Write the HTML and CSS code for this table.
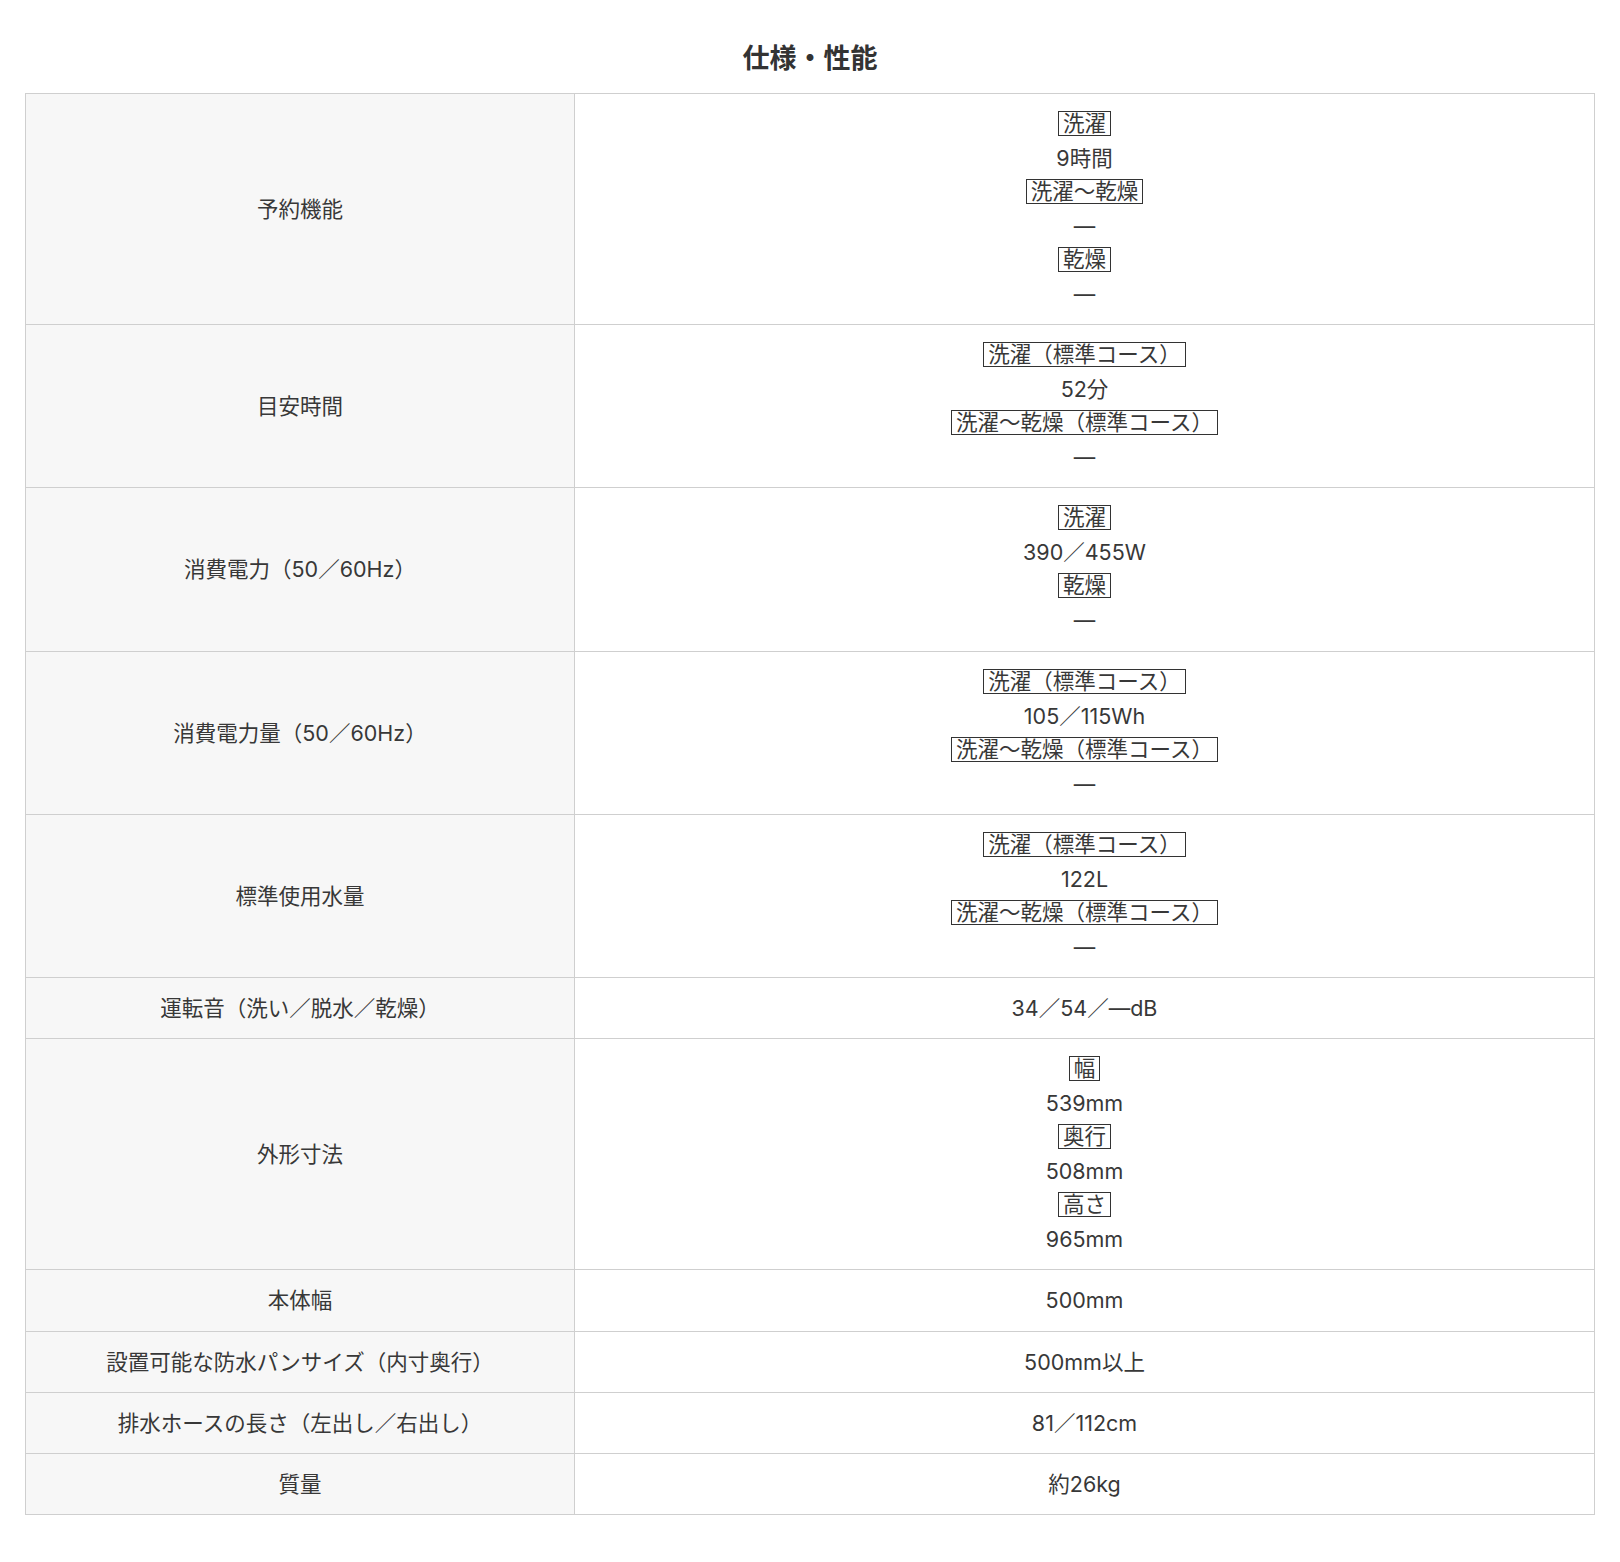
FILE: index.html
```html
<!DOCTYPE html>
<html lang="ja">
<head>
<meta charset="utf-8">
<title>仕様・性能</title>
<link rel="stylesheet" href="styles.css">
</head>
<body>
<section class="spec">
  <h2 class="spec-title">仕様・性能</h2>
  <table class="spec-table">
    <tbody>
      <tr>
        <th>予約機能</th>
        <td>
          <div class="line"><span class="tag">洗濯</span></div>
          <div class="line">9時間</div>
          <div class="line"><span class="tag">洗濯～乾燥</span></div>
          <div class="line">―</div>
          <div class="line"><span class="tag">乾燥</span></div>
          <div class="line">―</div>
        </td>
      </tr>
      <tr>
        <th>目安時間</th>
        <td>
          <div class="line"><span class="tag">洗濯（標準コース）</span></div>
          <div class="line">52分</div>
          <div class="line"><span class="tag">洗濯～乾燥（標準コース）</span></div>
          <div class="line">―</div>
        </td>
      </tr>
      <tr>
        <th>消費電力（50／60Hz）</th>
        <td>
          <div class="line"><span class="tag">洗濯</span></div>
          <div class="line">390／455W</div>
          <div class="line"><span class="tag">乾燥</span></div>
          <div class="line">―</div>
        </td>
      </tr>
      <tr>
        <th>消費電力量（50／60Hz）</th>
        <td>
          <div class="line"><span class="tag">洗濯（標準コース）</span></div>
          <div class="line">105／115Wh</div>
          <div class="line"><span class="tag">洗濯～乾燥（標準コース）</span></div>
          <div class="line">―</div>
        </td>
      </tr>
      <tr>
        <th>標準使用水量</th>
        <td>
          <div class="line"><span class="tag">洗濯（標準コース）</span></div>
          <div class="line">122L</div>
          <div class="line"><span class="tag">洗濯～乾燥（標準コース）</span></div>
          <div class="line">―</div>
        </td>
      </tr>
      <tr>
        <th>運転音（洗い／脱水／乾燥）</th>
        <td><div class="line">34／54／―dB</div></td>
      </tr>
      <tr>
        <th>外形寸法</th>
        <td>
          <div class="line"><span class="tag">幅</span></div>
          <div class="line">539mm</div>
          <div class="line"><span class="tag">奥行</span></div>
          <div class="line">508mm</div>
          <div class="line"><span class="tag">高さ</span></div>
          <div class="line">965mm</div>
        </td>
      </tr>
      <tr>
        <th>本体幅</th>
        <td><div class="line">500mm</div></td>
      </tr>
      <tr>
        <th>設置可能な防水パンサイズ（内寸奥行）</th>
        <td><div class="line">500mm以上</div></td>
      </tr>
      <tr>
        <th>排水ホースの長さ（左出し／右出し）</th>
        <td><div class="line">81／112cm</div></td>
      </tr>
      <tr>
        <th>質量</th>
        <td><div class="line">約26kg</div></td>
      </tr>
    </tbody>
  </table>
</section>
</body>
</html>
```

FILE: styles.css
```css
html, body {
  margin: 0;
  padding: 0;
  background: #fff;
}

body {
  font-family: "Noto Sans CJK JP", "Noto Sans", sans-serif;
  color: #333;
}

.spec {
  padding: 37px 25px 40px;
}

.spec-title {
  margin: 0 0 16px;
  text-align: center;
  font-size: 27px;
  line-height: 40px;
  font-weight: 700;
  color: #333;
}

.spec-table {
  width: 100%;
  border-collapse: collapse;
  table-layout: fixed;
}

.spec-table th,
.spec-table td {
  border: 1px solid #cfcfcf;
  padding: 13px 10px 13.2px;
  text-align: center;
  vertical-align: middle;
  font-family: Inter, "Noto Sans CJK JP", sans-serif;
  font-size: 21.5px;
  line-height: 34px;
  font-weight: 400;
  color: #383838;
}

.spec-table th {
  width: 528px;
  background: #f7f7f7;
}

.spec-table td {
  background: #fff;
}

.line {
  line-height: 34px;
}

.tag {
  display: inline-block;
  border: 1px solid #333;
  padding: 0 4px;
  margin-top: 4px;
  line-height: 23px;
  vertical-align: top;
}
```
